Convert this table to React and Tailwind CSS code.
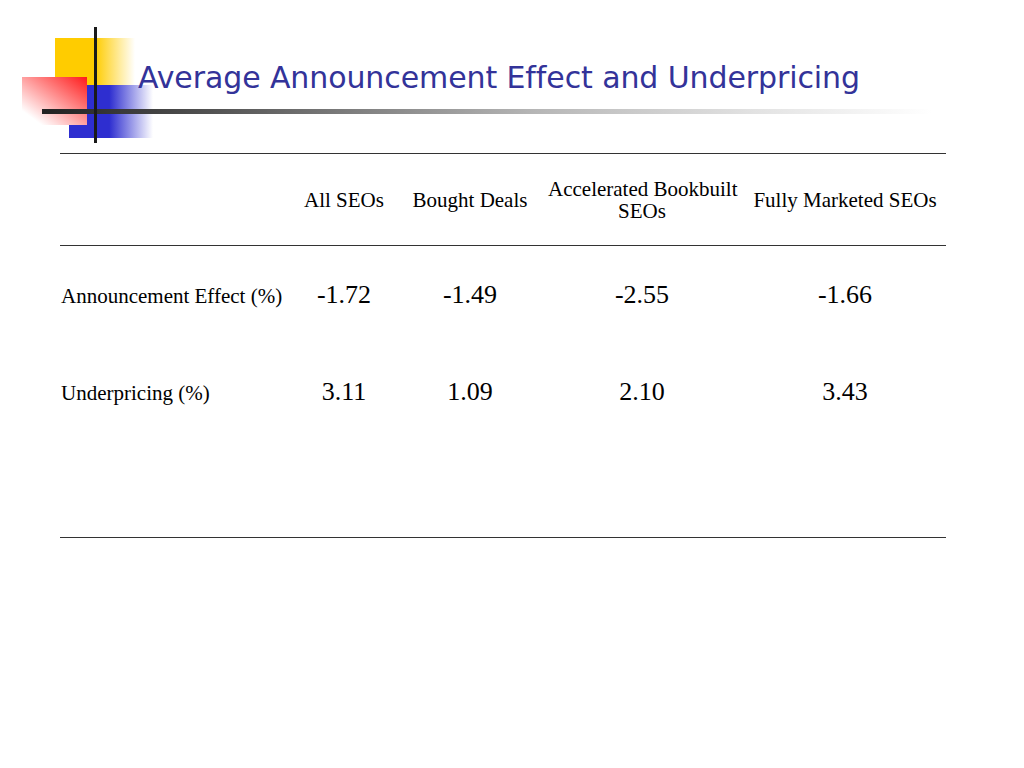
import React from "react";

const serif = { fontFamily: '"Liberation Serif", "Times New Roman", serif' };
const titleFont = { fontFamily: '"DejaVu Sans", Tahoma, Verdana, sans-serif' };

function Logo() {
  return (
    <svg
      className="absolute left-0 top-0"
      width="1024"
      height="153"
      viewBox="0 0 1024 153"
      aria-hidden="true"
    >
      <defs>
        <linearGradient id="yg" x1="0" y1="0" x2="1" y2="0">
          <stop offset="0" stopColor="#FFCC00" />
          <stop offset="0.5" stopColor="#FFCC00" />
          <stop offset="1" stopColor="#FFFFFF" />
        </linearGradient>
        <linearGradient id="bg" x1="0" y1="0" x2="1" y2="0">
          <stop offset="0" stopColor="#2E2ED0" />
          <stop offset="0.48" stopColor="#2E2ED0" />
          <stop offset="1" stopColor="#FFFFFF" />
        </linearGradient>
        <linearGradient id="rg" x1="1" y1="0" x2="0" y2="1">
          <stop offset="0" stopColor="#FF1A1A" />
          <stop offset="0.85" stopColor="#FFFFFF" />
          <stop offset="1" stopColor="#FFFFFF" />
        </linearGradient>
        <linearGradient id="barg" x1="0" y1="0" x2="1" y2="0">
          <stop offset="0" stopColor="#222222" />
          <stop offset="0.2" stopColor="#555555" />
          <stop offset="0.55" stopColor="#B5B5B5" />
          <stop offset="0.8" stopColor="#E2E2E2" />
          <stop offset="1" stopColor="#FFFFFF" />
        </linearGradient>
      </defs>
      <rect x="55" y="38" width="80" height="47" fill="url(#yg)" />
      <rect x="69" y="85" width="84" height="53" fill="url(#bg)" />
      <rect x="22" y="77" width="65" height="48" fill="url(#rg)" />
      <rect x="42" y="109" width="890" height="5" fill="url(#barg)" />
      <rect x="94" y="27" width="3" height="116" fill="#1A1A1A" />
    </svg>
  );
}

const cols = "grid grid-cols-[236px_96px_156px_188px_218px]";

function DataRow({ label, values, className }) {
  return (
    <div className={`${cols} items-baseline ${className}`} style={serif}>
      <div className="pl-[1px] text-[21px] leading-[24px] text-black whitespace-nowrap">{label}</div>
      {values.map((v, i) => (
        <div key={i} className="text-center text-[26px] leading-[30px] text-black">
          {v}
        </div>
      ))}
    </div>
  );
}

export default function App() {
  return (
    <div className="relative w-[1024px] h-[768px] bg-white overflow-hidden">
      <header className="relative h-[153px]">
        <Logo />
        <h1
          className="relative pl-[138px] pt-[58px] text-[30px] leading-[40px] font-normal text-[#333399] whitespace-nowrap tracking-[-0.1px]"
          style={titleFont}
        >
          Average Announcement Effect and Underpricing
        </h1>
      </header>

      <div className="ml-[60px] w-[886px]">
        <div className="h-px bg-[#333333]" />
        <div className={`${cols} h-[91px] items-center text-[21px] leading-[22px] text-black`} style={serif}>
          <div />
          <div className="text-center whitespace-nowrap">All SEOs</div>
          <div className="text-center whitespace-nowrap">Bought Deals</div>
          <div className="text-center whitespace-nowrap">
            Accelerated Bookbuilt
            <br />
            SEOs
          </div>
          <div className="text-center whitespace-nowrap">Fully Marketed SEOs</div>
        </div>
        <div className="h-px bg-[#333333]" />

        <DataRow
          label="Announcement Effect (%)"
          values={["-1.72", "-1.49", "-2.55", "-1.66"]}
          className="mt-[34px]"
        />
        <DataRow
          label="Underpricing (%)"
          values={["3.11", "1.09", "2.10", "3.43"]}
          className="mt-[67px]"
        />
        <div className="mt-[130px] h-px bg-[#333333]" />
      </div>
    </div>
  );
}
